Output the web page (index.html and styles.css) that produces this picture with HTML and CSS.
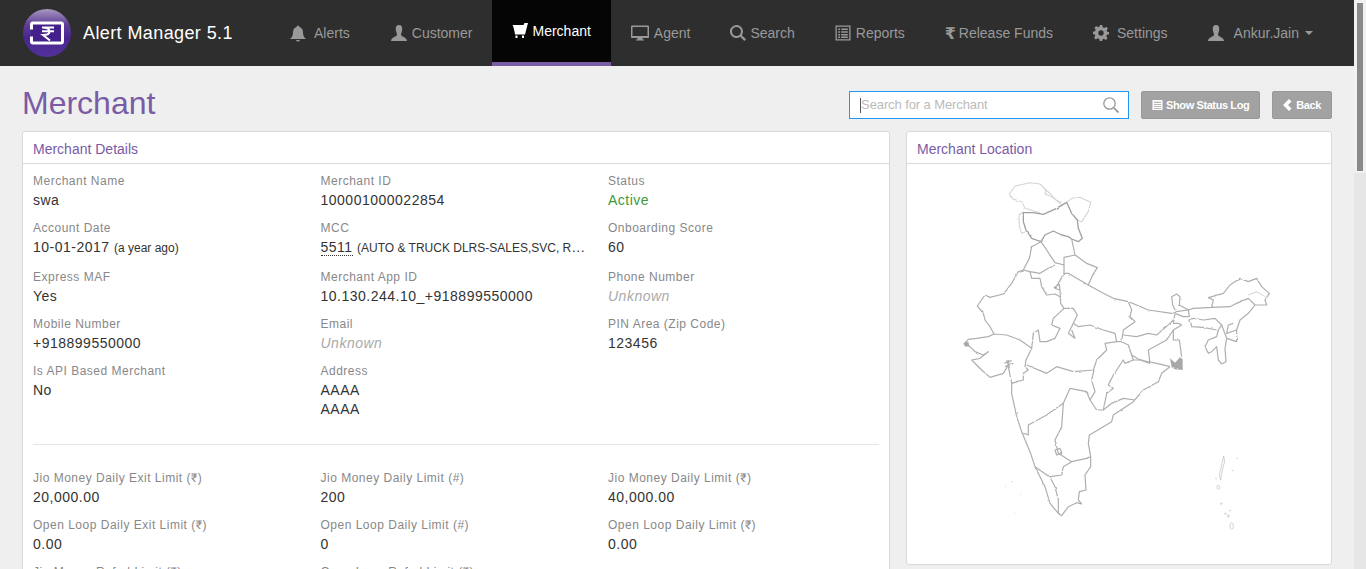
FILE: index.html
```html
<!DOCTYPE html>
<html lang="en">
<head>
  <meta charset="UTF-8" />
  <title>Alert Manager - Merchant</title>
  <meta name="viewport" content="width=device-width, initial-scale=1.0" />
  <link rel="stylesheet" href="styles.css">
</head>
<body>

<div class="app">
  <!-- Top bar -->
  <nav class="navbar">
    <a class="brand">
      <svg class="logo" width="48" height="48" viewBox="0 0 48 48">
        <defs>
          <linearGradient id="logo-bg" x1="0" y1="0" x2="0" y2="1">
            <stop offset="0" stop-color="#a898c0"/>
            <stop offset="0.32" stop-color="#5f3f98"/>
            <stop offset="0.6" stop-color="#4a2590"/>
            <stop offset="1" stop-color="#54309a"/>
          </linearGradient>
        </defs>
        <circle cx="24" cy="24" r="24" fill="url(#logo-bg)"/>
        <rect x="8" y="14" width="32" height="20" fill="#43208a"/>
        <path d="M8.500 20.500V15.500Q8.500 14 10 14H38Q39.500 14 39.500 15.500V32.500Q39.500 34 38 34H10Q8.500 34 8.500 32.500V27.500" fill="none" stroke="#fff" stroke-width="3"/>
        <path d="M19 18.500H31M19 22.300H31M19 18.500Q26.500 18.500 26.500 22.500Q26.500 26 20 26L27 31.500" fill="none" stroke="#fff" stroke-width="2"/>
      </svg>
      <span class="brand-name">Alert Manager 5.1</span>
    </a>
    <ul class="nav-list">
      <li class="nav-item nav-alerts"><svg class="nav-icon" viewBox="0 0 16 16"><path d="M8 0Q9.400 0 9.400 1.500Q13 2.500 13 7Q13 11 16 13.500H0Q3 11 3 7Q3 2.500 6.600 1.500Q6.600 0 8 0ZM6 14.500H10Q9.600 16 8 16T6 14.500Z"/></svg><span>Alerts</span></li>
      <li class="nav-item"><svg class="nav-icon" viewBox="0 0 16 16"><path d="M8 0C10.500 0 11.500 2 11.200 4.800C11 7 10 8.500 10 9.700C10 11.500 15.500 11.700 16 16H0C0.500 11.700 6 11.500 6 9.700C6 8.500 5 7 4.800 4.800C4.500 2 5.500 0 8 0Z"/></svg><span>Customer</span></li>
      <li class="nav-item active"><svg class="nav-icon icon-tight" viewBox="0 0 16 16"><path d="M0 2H11.500L12.500 0H16L13 11.500H3L2.500 8.500L1 2.500ZM3.500 12.500H5.500V15H3.500ZM10 12.500H12V15H10Z"/></svg><span>Merchant</span></li>
      <li class="nav-item"><svg class="nav-icon icon-wide" viewBox="0 0 18 16"><path fill-rule="evenodd" d="M1 0.500H17Q18 0.500 18 1.500V12Q18 13 17 13H11.500V14.500H13V15.500H5V14.500H6.500V13H1Q0 13 0 12V1.500Q0 0.500 1 0.500ZM1.500 2V11H16.500V2Z"/></svg><span>Agent</span></li>
      <li class="nav-item"><svg class="nav-icon icon-tight" viewBox="0 0 16 16"><path fill-rule="evenodd" d="M6.500 0A6.500 6.500 0 0 1 11.800 10.200L16 14.300L14.300 16L10.200 11.800A6.500 6.500 0 1 1 6.500 0ZM6.500 2A4.500 4.500 0 1 0 6.500 11A4.500 4.500 0 0 0 6.500 2Z"/></svg><span>Search</span></li>
      <li class="nav-item"><svg class="nav-icon" viewBox="0 0 16 16"><path fill-rule="evenodd" d="M0.500 0.500H15.500V15.500H0.500ZM1.800 1.800V14.200H14.200V1.800ZM3.200 3.500H5V5H3.200ZM6.200 3.500H12.800V5H6.200ZM3.200 6.300H5V7.800H3.200ZM6.200 6.300H12.800V7.800H6.200ZM3.200 9H5V10.500H3.200ZM6.200 9H12.800V10.500H6.200ZM3.200 11.500H5V13H3.200ZM6.200 11.500H12.800V13H6.200Z"/></svg><span>Reports</span></li>
      <li class="nav-item"><span class="rupee-icon">₹</span><span>Release Funds</span></li>
      <li class="nav-item"><svg class="nav-icon settings-icon" viewBox="0 0 16 16"><path fill-rule="evenodd" d="M6.800 0H9.200L9.700 2.200L11.300 2.900L13.200 1.700L14.900 3.400L13.700 5.300L14.400 6.900L16 7V9.200L14 9.700L13.300 11.300L14.500 13.200L12.800 14.900L10.900 13.700L9.400 14.400L9.200 16H6.800L6.300 14L4.700 13.300L2.800 14.500L1.100 12.800L2.300 10.900L1.600 9.300L0 9.200V6.800L2 6.300L2.700 4.700L1.500 2.800L3.200 1.100L5.100 2.300L6.600 1.600ZM8 5.300A2.700 2.700 0 1 0 8 10.700A2.700 2.700 0 0 0 8 5.300Z"/></svg><span>Settings</span></li>
      <li class="nav-item"><svg class="nav-icon user-icon" viewBox="0 0 16 16"><path d="M8 0C10.500 0 11.500 2 11.200 4.800C11 7 10 8.500 10 9.700C10 11.500 15.500 11.700 16 16H0C0.500 11.700 6 11.500 6 9.700C6 8.500 5 7 4.800 4.800C4.500 2 5.500 0 8 0Z"/></svg><span>Ankur.Jain</span><i class="caret"></i></li>
    </ul>
  </nav>

  <main class="content">
    <div class="page-head">
      <h1>Merchant</h1>
      <div class="page-actions">
        <div class="search-box">
          <i class="text-caret"></i>
          <input type="text" placeholder="Search for a Merchant" />
          <svg class="search-icon" viewBox="0 0 16 16"><circle cx="6.500" cy="6.500" r="5.700" fill="none" stroke="#999" stroke-width="1.300"/><path d="M10.800 10.800L15.500 15.500" stroke="#999" stroke-width="1.800"/></svg>
        </div>
        <button class="btn"><svg class="btn-icon" viewBox="0 0 12 12"><path fill-rule="evenodd" d="M0.500 0.500H11.500V11.500H0.500ZM2 2.500V3.500H10V2.500ZM2 4.800V5.800H10V4.800ZM2 7V8H10V7ZM2 9.200V10.200H10V9.200Z"/></svg>Show Status Log</button>
        <button class="btn btn-back"><svg class="btn-icon" viewBox="0 0 9 12"><path d="M6 0L8.500 2.500L5 6L8.500 9.500L6 12L0 6Z"/></svg>Back</button>
      </div>
    </div>

    <div class="panels">
      <section class="panel panel-details">
        <div class="panel-title">Merchant Details</div>
        <div class="panel-body">
          <div class="field-grid">
            <div class="field"><label>Merchant Name</label><div class="value">swa</div></div>
            <div class="field"><label>Merchant ID</label><div class="value">100001000022854</div></div>
            <div class="field"><label>Status</label><div class="value active-status">Active</div></div>

            <div class="field field-tall"><label>Account Date</label><div class="value">10-01-2017 <small>(a year ago)</small></div></div>
            <div class="field field-tall"><label>MCC</label><div class="value mcc"><abbr>5511</abbr> <small>(AUTO &amp; TRUCK DLRS-SALES,SVC, REPAIRS)</small></div></div>
            <div class="field field-tall"><label>Onboarding Score</label><div class="value">60</div></div>

            <div class="field"><label>Express MAF</label><div class="value">Yes</div></div>
            <div class="field"><label>Merchant App ID</label><div class="value">10.130.244.10_+918899550000</div></div>
            <div class="field"><label>Phone Number</label><div class="value unknown">Unknown</div></div>

            <div class="field"><label>Mobile Number</label><div class="value">+918899550000</div></div>
            <div class="field"><label>Email</label><div class="value unknown">Unknown</div></div>
            <div class="field"><label>PIN Area (Zip Code)</label><div class="value">123456</div></div>

            <div class="field"><label>Is API Based Merchant</label><div class="value">No</div></div>
            <div class="field"><label>Address</label><div class="value">AAAA<br>AAAA</div></div>
          </div>

          <hr />

          <div class="field-grid">
            <div class="field"><label>Jio Money Daily Exit Limit (₹)</label><div class="value">20,000.00</div></div>
            <div class="field"><label>Jio Money Daily Limit (#)</label><div class="value">200</div></div>
            <div class="field"><label>Jio Money Daily Limit (₹)</label><div class="value">40,000.00</div></div>

            <div class="field"><label>Open Loop Daily Exit Limit (₹)</label><div class="value">0.00</div></div>
            <div class="field"><label>Open Loop Daily Limit (#)</label><div class="value">0</div></div>
            <div class="field"><label>Open Loop Daily Limit (₹)</label><div class="value">0.00</div></div>

            <div class="field"><label>Jio Money Refnd Limit (₹)</label><div class="value">0.00</div></div>
            <div class="field"><label>Open Loop Refnd Limit (₹)</label><div class="value">0.00</div></div>
          </div>
        </div>
      </section>

      <section class="panel panel-map">
        <div class="panel-title">Merchant Location</div>
        <div class="map-body">
          <svg class="india-map" width="340" height="400" viewBox="0 0 1020 1200">
            <defs>
              <!-- makes the borders wobble like a real map -->
              <filter id="rough" x="0" y="0" width="100%" height="100%" filterUnits="userSpaceOnUse">
                <feTurbulence type="fractalNoise" baseFrequency="0.05" numOctaves="2" seed="4"/>
                <feDisplacementMap in="SourceGraphic" scale="6" xChannelSelector="R" yChannelSelector="G"/>
              </filter>
            </defs>
            <g filter="url(#rough)">
            <!-- disputed north, drawn paler -->
            <g class="map-pale">
              <path d="M365 105L350 92L335 75L318 60L300 42L270 38L225 48L208 72L220 88L245 95L255 115L300 128"/>
              <path d="M380 97L395 85L420 82L452 97L445 125L425 155L412 150"/>
              <path d="M250 125L237 135L238 170L245 190L258 185"/>
              <path d="M318 60L315 72L335 80L350 92L365 97"/>
              <path d="M925 375L950 365L975 380"/>
            </g>
            <g class="map-line">
              <path class="map-dark" d="M380 97L350 115L310 133L280 128L250 128L250 155L258 180L275 205L303 215L315 195L340 183L365 195L385 200L395 207L415 215L427 205L415 175L412 150L395 130Z"/>
              <path d="M303 215L320 240L345 278L372 285L372 262L405 255L395 207"/>
              <path d="M303 215L275 230L268 265L250 300L270 305L300 310L325 295L345 285"/>
              <path d="M405 255L440 280L472 293L458 315L445 345L410 325L385 310L372 310L372 285"/>
              <path d="M250 300L235 305L215 340L190 372L150 382L135 375L112 408L130 430L135 450L150 470L162 492L145 500L110 505L85 508L72 522L90 530L105 545L130 555L145 545L120 565L95 570L125 600L150 622L190 610L205 585L200 570"/>
              <path d="M205 590L215 640L215 670L230 740L245 785L270 845L285 890L315 950L330 1000L355 1030L365 1037L385 1010L410 998L425 1002L415 990L418 965L438 960L435 915L452 890L452 860L445 820L448 795L470 782L490 770L515 755L520 735L580 695L610 660L655 635L665 610L690 590"/>
              <path d="M445 345L490 370L520 385L565 395L590 405L625 420L695 430L708 425L698 405L695 380L710 372L720 380L718 405L745 420L760 415L815 412L820 390L805 383L850 370L870 345L900 325L925 335L950 325L965 350L988 370L975 390L980 405L945 405L925 430L900 450L890 480L890 515L860 505L855 535L858 575L845 582L835 570L830 530L815 545L805 550L795 530L805 510L830 500L835 480L845 465L825 445L790 450L760 445L750 450L755 470L790 472L830 480"/>
              <path d="M815 412L870 410L890 400L925 385L945 405"/>
              <path d="M880 460L865 465L860 490L890 480M845 465L860 505"/>
              <path d="M708 425L745 420L748 440L730 440L705 430L700 460L715 460L725 465L700 480L700 510L718 510L725 560"/>
              <path d="M372 310L355 340L345 355L360 360L362 400L372 415L400 415L412 435L400 460L415 470L450 465L490 480L525 490L530 515L545 515L550 480L585 455L570 440L575 420L565 395"/>
              <path d="M270 305L275 325L300 325L305 350L320 375L345 372L360 380"/>
              <path d="M345 355L358 343L360 360"/>
              <path d="M372 415L340 445L335 465L360 475L345 505L320 515L300 515L295 480L280 490L275 535L240 510L200 495L162 492"/>
              <path d="M400 460L385 490L405 505L395 480"/>
              <path d="M275 535L258 570L255 590L265 600L250 610L250 630L215 640"/>
              <path d="M260 585L320 610L350 590L400 605L460 600L470 570L500 540L495 520L530 515"/>
              <path d="M545 515L565 525L580 570L555 580L550 570L520 615L505 645L520 655L500 670L490 720L470 720L450 690L465 665L455 630L462 600"/>
              <path d="M550 495L590 500L625 490L650 495L690 460L700 450"/>
              <path d="M575 555L600 570L630 580L625 540L680 510L700 480"/>
              <path d="M580 570L600 570L650 580L690 590"/>
              <path d="M490 720L515 700L550 685L585 690"/>
              <path d="M390 655L440 665L450 690M390 655L370 700L365 770L345 810L355 850L395 875L370 890L365 915L330 920"/>
              <path d="M395 875L440 865L452 860"/>
              <path d="M370 700L320 735L265 765L265 795L250 790"/>
              <path d="M285 890L330 922L345 950L355 990L355 1030"/>
              <path d="M345 840L360 835L365 850L350 855Z"/>
              <path d="M190 580L215 572M195 590L220 580M205 570L208 595"/>
            </g>
            <path class="map-fill" d="M690 565L705 578L720 562L728 568L728 600L705 598L695 592Z"/>
            <path class="map-fill" d="M72 518L85 515L88 528L75 530Z"/>
            </g>
            <!-- islands -->
            <g class="map-islands">
              <path d="M851 858L854 875L847 900L842 930L838 915L845 885Z"/>
              <ellipse cx="835" cy="952" rx="4" ry="6"/>
              <circle cx="844" cy="1001" r="2"/>
              <circle cx="856" cy="1031" r="2"/>
              <circle cx="865" cy="1038" r="3"/>
              <circle cx="870" cy="1022" r="1.500"/>
              <ellipse cx="875" cy="1068" rx="5" ry="10"/>
              <circle cx="892" cy="865" r="1"/>
              <circle cx="878" cy="902" r="1"/>
              <circle cx="828" cy="925" r="1"/>
            </g>
            <g class="map-dots">
              <circle cx="215" cy="935" r="2"/>
              <circle cx="222" cy="925" r="1"/>
              <circle cx="197" cy="948" r="1.500"/>
              <circle cx="212" cy="955" r="1"/>
              <circle cx="243" cy="972" r="1.500"/>
              <circle cx="224" cy="1030" r="1.500"/>
            </g>
          </svg>
        </div>
      </section>
    </div>
  </main>
</div>

<!-- Scrollbar of the window -->
<div class="page-scroll">
  <div class="page-scroll-top"><div class="page-scroll-thumb"></div></div>
</div>

</body>
</html>
```

FILE: styles.css
```css
html, body {
  height: 100%;
}

body {
  font-family: "Liberation Sans", Roboto, Arial, sans-serif;
  background: #efefef;
  color: #333;
  margin: 0;
  padding: 0;
  display: flex;
  overflow: hidden;
}

.app {
  flex-grow: 1;
  min-width: 0;
}

/* Top bar */
.navbar {
  display: flex;
  height: 66px;
  background: #2e2e2e;
}

.brand {
  display: flex;
  align-items: center;
  width: 270px;
  padding-left: 23px;
  box-sizing: border-box;
}

.brand-name {
  margin-left: 12px;
  padding-top: 1px;
  color: #fff;
  font-size: 18px;
  letter-spacing: 0.400px;
}

.nav-list {
  display: flex;
  list-style: none;
  margin: 0;
  padding: 0;
}

.nav-item {
  display: flex;
  align-items: center;
  padding: 0 20px;
  color: #999;
  font-size: 14px;
  box-sizing: border-box;
}

.nav-item.active {
  background: #050505;
  color: #fff;
  border-bottom: 4px solid #7a5ba6;
}

.nav-icon {
  width: 16px;
  height: 16px;
  margin-right: 5px;
  fill: currentColor;
  flex-shrink: 0;
}

.icon-wide {
  width: 18px;
}

.icon-tight {
  margin-right: 4px;
}

.nav-alerts {
  padding-right: 21px;
}

.nav-alerts .nav-icon {
  height: 17px;
  margin-right: 8px;
}

.settings-icon {
  margin-right: 8px;
}

.user-icon {
  margin-right: 10px;
}

.rupee-icon {
  width: 9px;
  margin-right: 5px;
  font-size: 16px;
  font-weight: bold;
  font-family: "DejaVu Sans", sans-serif;
}

.caret {
  width: 0;
  height: 0;
  margin-left: 6px;
  border-top: 4px solid #999;
  border-left: 4px solid transparent;
  border-right: 4px solid transparent;
}

/* Page */
.content {
  padding: 0 22px;
}

.page-head {
  display: flex;
  align-items: center;
  justify-content: space-between;
  height: 55px;
  padding-top: 10px;
}

h1 {
  margin: 0;
  font-size: 32px;
  font-weight: normal;
  color: #7a5ba6;
}

.page-actions {
  display: flex;
  align-items: center;
  margin-top: 2px;
}

.search-box {
  position: relative;
  width: 280px;
  height: 28px;
}

.search-box input {
  width: 100%;
  height: 100%;
  box-sizing: border-box;
  padding: 0 30px 0 11px;
  border: 1px solid #2196f3;
  background: #fff;
  font-family: inherit;
  font-size: 13px;
  letter-spacing: -0.100px;
  outline: none;
}

.search-box input::placeholder {
  color: #bbb;
}

.text-caret {
  position: absolute;
  left: 11px;
  top: 7px;
  width: 1px;
  height: 15px;
  background: #555;
}

.search-icon {
  position: absolute;
  right: 10px;
  top: 6px;
  width: 16px;
  height: 16px;
}

.btn {
  display: flex;
  align-items: center;
  height: 28px;
  margin-left: 12px;
  padding: 0 10px;
  background: #a2a2a2;
  border: 1px solid #989898;
  border-radius: 2px;
  color: #fff;
  font-family: inherit;
  font-size: 11px;
  font-weight: bold;
  letter-spacing: -0.400px;
}

.btn-icon {
  width: 11px;
  height: 12px;
  margin-right: 3px;
  fill: #fff;
}

.btn-back .btn-icon {
  width: 9px;
  margin-right: 4px;
}

/* Panels */
.panels {
  display: flex;
  align-items: flex-start;
  gap: 16px;
}

.panel {
  background: #fff;
  border: 1px solid #d9d9d9;
  border-radius: 3px;
  box-sizing: border-box;
}

.panel-details {
  width: 868px;
}

.panel-map {
  width: 426px;
  height: 434px;
}

.panel-title {
  height: 31px;
  line-height: 34px;
  padding: 0 10px;
  border-bottom: 1px solid #d9d9d9;
  color: #7a5ba6;
  font-size: 14px;
}

.panel-body {
  padding: 8px 10px;
}

.field-grid {
  display: grid;
  grid-template-columns: repeat(3, 287.500px);
  grid-auto-rows: min-content;
}

.field {
  min-width: 0;
  padding-right: 15px;
  padding-bottom: 9px;
  letter-spacing: 0.500px;
}

.field-tall {
  padding-bottom: 10px;
}

.field label {
  display: block;
  height: 19px;
  line-height: 19px;
  color: #888;
  font-size: 12px;
}

.value {
  line-height: 19px;
  font-size: 14px;
  color: #333;
}

.value small {
  font-size: 12px;
  letter-spacing: 0;
}

.mcc {
  white-space: nowrap;
  overflow: hidden;
  text-overflow: ellipsis;
}

abbr {
  border-bottom: 1px dotted #333;
}

.active-status {
  color: #3c9a3c;
}

.unknown {
  color: #aaa;
  font-style: italic;
}

hr {
  height: 1px;
  margin: 16px 0 24px;
  background: #e6e6e6;
  border: none;
}

/* Map */
.map-body {
  padding-top: 6px;
  padding-left: 33px;
}

.india-map {
  display: block;
}

.map-pale path, .map-line path {
  fill: none;
  stroke-linejoin: round;
}

.map-pale path {
  stroke: #d4d4d4;
  stroke-width: 3.200;
}

.map-line path {
  stroke: #aeaeae;
  stroke-width: 3.600;
}

.map-line .map-dark {
  stroke: #a0a0a0;
  stroke-width: 4;
}

.map-fill {
  fill: #a8a8a8;
}

.map-islands path, .map-islands ellipse, .map-islands circle {
  fill: #fff;
  stroke: #bbb;
  stroke-width: 2;
}

.map-dots circle {
  fill: #ccc;
}

/* Window scrollbar */
.page-scroll {
  width: 12px;
  flex-shrink: 0;
  background: #e6e6e6;
}

.page-scroll-top {
  height: 173px;
  padding-top: 3px;
  box-sizing: border-box;
  background: #f1f1f1;
}

.page-scroll-thumb {
  width: 6px;
  height: 168px;
  margin: 0 3px;
  background: #8a8a8a;
}
```
